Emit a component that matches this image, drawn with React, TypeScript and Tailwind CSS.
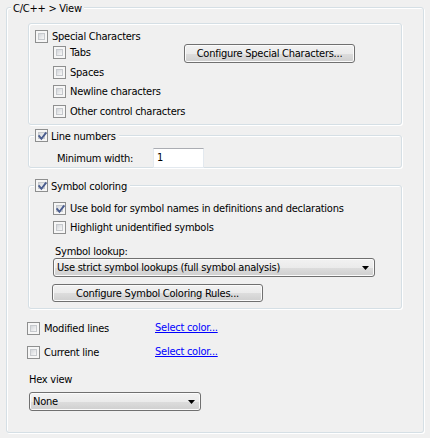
import React from "react";

function Box({ checked }: { checked?: boolean }) {
  return (
    <span className="relative flex h-[13px] w-[13px] shrink-0 border border-[#8e8f8f] bg-[#f6f6f6] p-[2px]">
      <span className="block h-full w-full border border-[#c6c9cd] bg-[linear-gradient(135deg,#d3d6da,#f8f8f8)]" />
      {checked && (
        <svg className="absolute left-[1px] top-[1px]" width="11" height="11" viewBox="0 0 11 11">
          <path d="M2.2 5.2 L4.4 7.8 L8.8 2.2" fill="none" stroke="#4a5d8f" strokeWidth="1.9" strokeLinecap="square" />
        </svg>
      )}
    </span>
  );
}

function Check({ label, checked, className = "" }: { label: string; checked?: boolean; className?: string }) {
  return (
    <div className={"flex h-[16px] items-center gap-[4px] " + className}>
      <Box checked={checked} />
      <span className="mt-[2px] whitespace-nowrap leading-[14px]">{label}</span>
    </div>
  );
}

function Arrow() {
  return (
    <svg width="7" height="4" viewBox="0 0 7 4" className="shrink-0">
      <path d="M0 0 H7 L3.5 4 Z" fill="#000" />
    </svg>
  );
}

const btn =
  "flex items-center justify-center rounded-[3px] border border-[#707070] bg-[linear-gradient(180deg,#f2f2f2_0%,#ebebeb_50%,#dddddd_51%,#cfcfcf_100%)] shadow-[inset_0_0_0_1px_#fbfbfb] whitespace-nowrap leading-[14px]";

const group =
  "rounded-[3px] border border-[#d5dfe5] shadow-[1px_1px_0_#ffffff,inset_1px_1px_0_#ffffff]";

export default function App() {
  return (
    <div className="h-[438px] w-[430px] overflow-hidden bg-[#f0f0f0] pl-[6px] font-['DejaVu_Sans_Condensed',Tahoma,sans-serif] text-[11px] tracking-[-0.25px] text-black">
      <fieldset className={"m-0 h-[433px] w-[418px] px-[6px] pb-0 " + group}>
        <legend className="ml-[-2px] bg-[#f0f0f0] px-[2px]">
          <span className="block h-[15px] pt-[1px] leading-[15px]">C/C++ &gt; View</span>
        </legend>

        {/* Special characters */}
        <div className={"ml-[15px] mt-[8px] h-[102px] w-[374px] pl-[6px] pt-[4px] " + group}>
          <Check label="Special Characters" />
          <div className="ml-[18px] flex h-[16px] items-center">
            <div className="w-[131px]">
              <Check label="Tabs" />
            </div>
            <div className={"mt-[2px] h-[19px] w-[171px] shrink-0 pt-[1px] " + btn}>Configure Special Characters...</div>
          </div>
          <Check label="Spaces" className="ml-[18px] mt-[4px]" />
          <Check label="Newline characters" className="ml-[18px] mt-[3px]" />
          <Check label="Other control characters" className="ml-[18px] mt-[4px]" />
        </div>

        {/* Line numbers */}
        <fieldset className={"ml-[15px] mt-[3px] w-[374px] px-[5px] pb-0 " + group}>
          <legend className="bg-[#f0f0f0] pl-[1px] pr-[3px]">
            <span className="flex h-[15px] items-center gap-[3px]">
              <Box checked />
              <span className="mt-[2px] leading-[14px]">Line numbers</span>
            </span>
          </legend>
          <div className="mb-[-1px] ml-[23px] mt-[5px] flex items-center">
            <span className="mt-[2px] w-[96px] leading-[14px]">Minimum width:</span>
            <div className="flex h-[20px] w-[51px] items-center border border-[#e3e9ef] border-t-[#abadb3] bg-white pl-[3px] pt-[1px]">
              1
            </div>
          </div>
        </fieldset>

        {/* Symbol coloring */}
        <fieldset className={"ml-[15px] mt-[10px] w-[374px] px-[5px] pb-[6px] " + group}>
          <legend className="bg-[#f0f0f0] pl-[1px] pr-[3px]">
            <span className="flex h-[15px] items-center gap-[3px]">
              <Box checked />
              <span className="mt-[2px] leading-[14px]">Symbol coloring</span>
            </span>
          </legend>
          <Check label="Use bold for symbol names in definitions and declarations" checked className="ml-[19px] mt-[7px]" />
          <Check label="Highlight unidentified symbols" className="ml-[19px] mt-[3px]" />
          <div className="ml-[21px] mt-[9px] h-[14px] pt-[1px] leading-[14px]">Symbol lookup:</div>
          <div className={"ml-[19px] h-[19px] w-[322px] !justify-between pl-[3px] pr-[5px] pt-[1px] " + btn}>
            <span>Use strict symbol lookups (full symbol analysis)</span>
            <Arrow />
          </div>
          <div className={"ml-[18px] mt-[7px] h-[18px] w-[211px] pt-[1px] " + btn}>Configure Symbol Coloring Rules...</div>
        </fieldset>

        {/* Modified / current line */}
        <div className="ml-[14px] mt-[11px] flex h-[16px] items-center">
          <div className="w-[128px]">
            <Check label="Modified lines" />
          </div>
          <span className="cursor-pointer text-[#0000ff] underline">Select color...</span>
        </div>
        <div className="ml-[14px] mt-[8px] flex h-[16px] items-center">
          <div className="w-[128px]">
            <Check label="Current line" />
          </div>
          <span className="cursor-pointer text-[#0000ff] underline">Select color...</span>
        </div>

        <div className="ml-[16px] mt-[12px] h-[14px] pt-[1px] leading-[14px]">Hex view</div>
        <div className={"ml-[16px] mt-[6px] h-[19px] w-[172px] !justify-between pl-[3px] pr-[5px] pt-[1px] " + btn}>
          <span>None</span>
          <Arrow />
        </div>
      </fieldset>
    </div>
  );
}
